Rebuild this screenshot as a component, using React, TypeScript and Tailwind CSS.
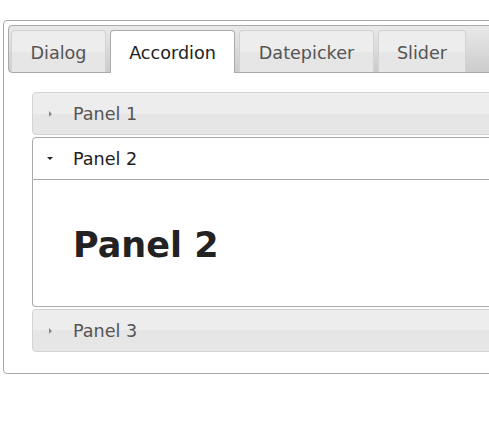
import { useState } from "react";

const tabs = [
  { id: "dialog", label: "Dialog", w: "w-[95px]" },
  { id: "accordion", label: "Accordion", w: "w-[125px]" },
  { id: "datepicker", label: "Datepicker", w: "w-[135px]" },
  { id: "slider", label: "Slider", w: "w-[88px]" },
];

const panels = ["Panel 1", "Panel 2", "Panel 3"];

function Caret({ open }: { open: boolean }) {
  return (
    <svg width="16" height="16" viewBox="0 0 16 16" className="shrink-0">
      {open ? (
        <polygon points="5,6 11,6 8,9" fill="#222" />
      ) : (
        <polygon points="7,5 7,11 10,8" fill="#888" />
      )}
    </svg>
  );
}

export default function App() {
  const [tab, setTab] = useState("accordion");
  const [open, setOpen] = useState(1);

  return (
    <div className="w-[489px] h-[427px] overflow-hidden bg-white font-['DejaVu_Sans',Verdana,sans-serif] text-[17.6px]">
      <div className="ml-[3px] mt-[20px] w-[560px] rounded-[4px] border border-[#aaa] p-[4px]">
        <div className="flex items-end rounded-[4px] border border-[#aaa] bg-[linear-gradient(#e9e9e9,#cccccc)] pl-[2px] pt-[4px]">
          {tabs.map((t) => {
            const active = t.id === tab;
            return (
              <button
                key={t.id}
                onClick={() => setTab(t.id)}
                className={
                  "mr-[4px] flex items-center justify-center rounded-t-[4px] border border-b-0 pt-[3px] " +
                  t.w +
                  " " +
                  (active
                    ? "-mb-px h-[43px] border-[#aaa] bg-white pb-[1px] text-[#212121]"
                    : "h-[42px] border-[#d3d3d3] bg-[linear-gradient(#ededed_50%,#e6e6e6_50%)] text-[#555]")
                }
              >
                {t.label}
              </button>
            );
          })}
        </div>

        <div className="px-[24px] pt-[19px] pb-[17px]">
          {panels.map((p, i) => {
            const isOpen = open === i;
            return (
              <div key={p} className={i === 0 ? "" : "mt-[2px]"}>
                <button
                  onClick={() => setOpen(isOpen ? -1 : i)}
                  className={
                    "flex h-[43px] w-full items-center border pl-[9px] text-left " +
                    (isOpen
                      ? "rounded-t-[4px] border-[#aaa] bg-white text-[#212121]"
                      : "rounded-[4px] border-[#d3d3d3] bg-[linear-gradient(#ededed_50%,#e6e6e6_50%)] text-[#555]")
                  }
                >
                  <Caret open={isOpen} />
                  <span className="ml-[15px] pt-[2px]">{p}</span>
                </button>
                {isOpen && (
                  <div className="h-[127px] rounded-b-[4px] border border-t-0 border-[#aaa] pl-[40px] pt-[45px] text-[#222]">
                    <h1 className="text-[35px] font-bold leading-[40px]">{p}</h1>
                  </div>
                )}
              </div>
            );
          })}
        </div>
      </div>
    </div>
  );
}
